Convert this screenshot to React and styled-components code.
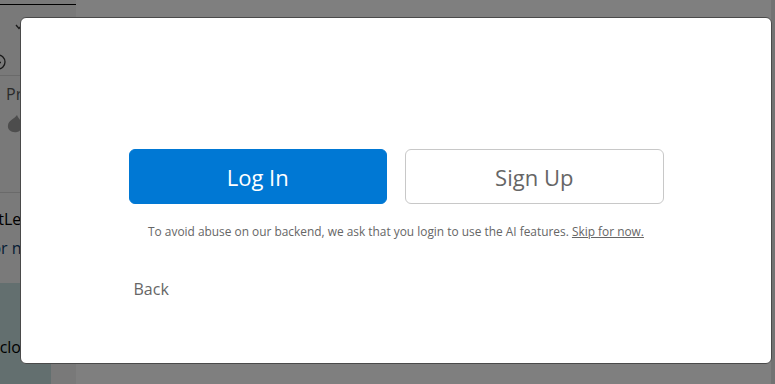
import React from "react"
import styled, { createGlobalStyle } from "styled-components"

const GlobalStyle = createGlobalStyle`
  html, body {
    margin: 0;
    padding: 0;
    width: 775px;
    height: 384px;
    overflow: hidden;
    font-family: "Open Sans", "Noto Sans", sans-serif;
  }
`

const Page = styled.div`
  position: relative;
  width: 775px;
  height: 384px;
  display: flex;
  background: #ffffff;
`

const Sidebar = styled.div`
  width: 76px;
  display: flex;
  flex-direction: column;
  background: #f2f2f2;
  overflow: hidden;
  color: #222;
`

const SideHeader = styled.div`
  height: 76px;
  border-bottom: 1px solid #d4d4d4;
  box-sizing: border-box;
  display: flex;
  flex-direction: column;
`

const TopRule = styled.div`
  height: 1px;
  margin-top: 4px;
  background: #000;
`

const HeaderIcons = styled.div`
  display: flex;
  flex-direction: column;
  padding: 19px 0 0 0;
  gap: 24px;
`

const SideSection = styled.div`
  height: ${p => p.$h}px;
  width: ${p => p.$w || "100%"};
  background: ${p => p.$bg || "transparent"};
  border-bottom: ${p => (p.$line ? "1px solid #d4d4d4" : "none")};
  box-sizing: border-box;
  display: flex;
  flex-direction: column;
  padding: ${p => p.$pad || "0"};
  font-size: 16px;
  white-space: nowrap;
`

const Muted = styled.span`
  color: ${p => p.$color || "#666"};
  margin-left: ${p => p.$ml || 0}px;
  line-height: ${p => p.$lh || 24}px;
`

const Overlay = styled.div`
  position: absolute;
  inset: 0;
  background: rgba(0, 0, 0, 0.5);
`

const Modal = styled.div`
  position: absolute;
  left: 20px;
  top: 17px;
  width: 752px;
  height: 347px;
  box-sizing: border-box;
  background: #fff;
  border: 1px solid #4a4a4a;
  border-radius: 6px;
  display: flex;
  flex-direction: column;
  align-items: center;
  padding-top: 131px;
`

const Content = styled.div`
  width: 535px;
  display: flex;
  flex-direction: column;
`

const ButtonRow = styled.div`
  display: flex;
  gap: 18px;
`

const Button = styled.button`
  flex: 1;
  height: 55px;
  border-radius: 6px;
  font-family: "Open Sans", "Noto Sans", sans-serif;
  font-size: 22px;
  cursor: pointer;
  border: 1px solid ${p => (p.$primary ? "#0078d4" : "#c8c8c8")};
  background: ${p => (p.$primary ? "#0078d4" : "#fff")};
  color: ${p => (p.$primary ? "#fff" : "#666")};
`

const Caption = styled.p`
  margin: 19px 0 0;
  text-align: center;
  font-size: 11.9px;
  line-height: 16px;
  color: #666;
`

const SkipLink = styled.a`
  color: #666;
  text-decoration: underline;
  cursor: pointer;
`

const BackLink = styled.a`
  margin-top: 39px;
  margin-left: 5px;
  font-size: 16px;
  line-height: 22px;
  color: #666;
  cursor: pointer;
`

const ScrollStrip = styled.div`
  position: absolute;
  right: 0;
  top: 0;
  width: 4px;
  height: 384px;
  background: #e6e6e6;
`

const ClockIcon = () => (
  <svg width="16" height="16" viewBox="0 0 16 16" style={{ marginLeft: -10 }}>
    <circle cx="8" cy="8" r="7" fill="none" stroke="#333" strokeWidth="1.3" />
    <path d="M8 4.5 V8.5 H11" fill="none" stroke="#333" strokeWidth="1.3" />
  </svg>
)

const Chevron = () => (
  <svg width="8" height="6" viewBox="0 0 8 6" style={{ marginLeft: 15 }}>
    <path d="M1 1 L4 4.5 L7 1" fill="none" stroke="#333" strokeWidth="1.3" />
  </svg>
)

const Blob = () => (
  <svg width="16" height="20" viewBox="0 0 16 20" style={{ marginLeft: 1, marginTop: 8 }}>
    <path d="M10 1 C6 6 2 6 1 11 C0 16 5 19 10 18 C15 17 16 12 14 8 C13 5 11 4 10 1 Z" fill="#9a9a9a" />
  </svg>
)

export default function App() {
  return (
    <>
      <GlobalStyle />
      <Page>
        <Sidebar>
          <SideHeader>
            <TopRule />
            <HeaderIcons>
              <Chevron />
              <ClockIcon />
            </HeaderIcons>
          </SideHeader>
          <SideSection $h={117} $line $pad="6px 0 0 6px">
            <Muted $color="#555">Pr</Muted>
            <Blob />
          </SideSection>
          <SideSection $h={90} $bg="#f4f4f4" $pad="12px 0 0 0">
            <Muted $color="#000" $lh={28} $ml={-19}>ExtLe</Muted>
            <Muted $color="#0a3a6a" $lh={30} $ml={-14}>for n</Muted>
          </SideSection>
          <SideSection $h={101} $w="51px" $bg="#c7dede" $pad="52px 0 0 0">
            <Muted $color="#000" $ml={-8}>cclor</Muted>
          </SideSection>
        </Sidebar>
        <ScrollStrip />
        <Overlay />
        <Modal>
          <Content>
            <ButtonRow>
              <Button $primary>Log In</Button>
              <Button>Sign Up</Button>
            </ButtonRow>
            <Caption>
              To avoid abuse on our backend, we ask that you login to use the AI features.{" "}
              <SkipLink>Skip for now.</SkipLink>
            </Caption>
            <BackLink>Back</BackLink>
          </Content>
        </Modal>
      </Page>
    </>
  )
}
